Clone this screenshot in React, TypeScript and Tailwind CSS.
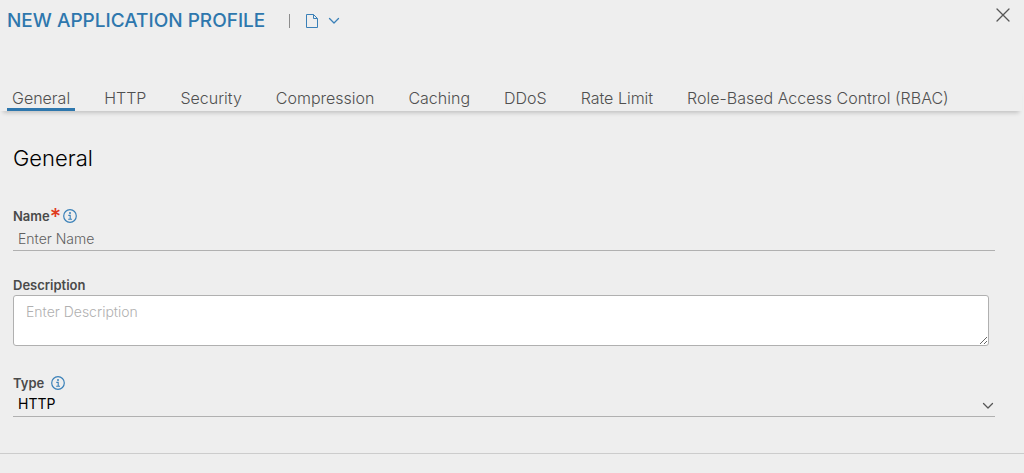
import { useState } from 'react';

const tabs = [
  'General',
  'HTTP',
  'Security',
  'Compression',
  'Caching',
  'DDoS',
  'Rate Limit',
  'Role-Based Access Control (RBAC)',
];

function Chevron({ className }: { className: string }) {
  return (
    <svg className={className} viewBox="0 0 12 8" fill="none" stroke="currentColor" strokeWidth="1.3" strokeLinecap="round" strokeLinejoin="round" aria-hidden="true">
      <path d="M1.5 1.5 6 6l4.500-4.500" />
    </svg>
  );
}

function InfoButton({ label }: { label: string }) {
  return (
    <button type="button" aria-label={label} className="text-[#3a80b8]">
      <svg className="size-3.5" viewBox="0 0 14 14" fill="none" stroke="currentColor" aria-hidden="true">
        <circle cx="7" cy="7" r="6.300" strokeWidth="1.200" />
        <circle cx="7" cy="4" r="1" fill="currentColor" stroke="none" />
        <path d="M5.300 6.400H7.200V10M5.200 10.300H9" strokeWidth="1.100" />
      </svg>
    </button>
  );
}

function Header() {
  return (
    <header className="flex h-[85px] items-start justify-between pr-3.5 pl-[7px]">
      <div className="flex h-[42px] items-center">
        <h1 className="text-[19px] font-medium text-[#2e77ad]">NEW APPLICATION PROFILE</h1>
        <span className="ml-6 h-3.5 w-px bg-[#8c8c8c]" />
        <button type="button" aria-label="Profile actions" className="ml-4 flex items-center gap-2.5 text-[#3a80b8]">
          <svg className="h-3.5 w-3" viewBox="0 0 12 14" fill="none" stroke="currentColor" strokeWidth="1" strokeLinejoin="round" aria-hidden="true">
            <path d="M.5.5H7.500L11.500 4.500V13.500H.5ZM7.500.5V4.500H11.500" />
          </svg>
          <Chevron className="h-2 w-3" />
        </button>
      </div>
      <button type="button" aria-label="Close" className="mt-2 text-[#565656]">
        <svg className="size-3.5" viewBox="0 0 14 14" fill="none" stroke="currentColor" strokeWidth="1.300" strokeLinecap="round" aria-hidden="true">
          <path d="m1 1 12 12M13 1 1 13" />
        </svg>
      </button>
    </header>
  );
}

export default function App() {
  const [active, setActive] = useState('General');

  return (
    <main className="min-h-screen bg-[#eeeeee] font-['Inter',sans-serif] text-[#4a4a4a]">
      <Header />
      <nav role="tablist" className="mr-0.5 flex gap-6 pl-[7px] shadow-[0_5px_4px_-3px_rgba(0,0,0,0.18)]">
        {tabs.map((tab) => (
          <button
            key={tab}
            type="button"
            role="tab"
            aria-selected={tab === active}
            onClick={() => setActive(tab)}
            className={`h-[26px] border-b-3 px-[5px] pt-0.5 text-base leading-5 font-light whitespace-nowrap text-[#505050] ${
              tab === active ? 'border-[#2e77ad]' : 'border-transparent'
            }`}
          >
            {tab}
          </button>
        ))}
      </nav>

      <form className="border-b border-[#cccccc] pr-[29px] pb-9 pl-[13px]">
        <h2 className="pt-[31px] text-[22px] leading-8 font-light text-black">General</h2>

        <div className="mt-8 flex h-5 items-center">
          <label htmlFor="name" className="text-[13px] leading-5 font-semibold">
            Name<span className="align-top text-[22px] leading-5 font-medium text-[#e03a1e]">*</span>
          </label>
          <span className="ml-0.5 flex">
            <InfoButton label="About name" />
          </span>
        </div>
        <input
          id="name"
          type="text"
          required
          placeholder="Enter Name"
          className="mt-px block h-6 w-full border-b border-[#b0b0b0] px-[5px] text-sm font-light text-black outline-none placeholder:text-[#5f5f5f]"
        />

        <label htmlFor="description" className="mt-6 block text-[13px] leading-5 font-semibold">
          Description
        </label>
        <div className="pr-1.5">
          <textarea
            id="description"
            placeholder="Enter Description"
            className="block h-[51px] w-full resize-y rounded-[3px] border border-[#b0b0b0] bg-white px-3 py-1.5 text-sm font-light text-black outline-none placeholder:text-[#b0b0b0]"
          />
        </div>

        <div className="mt-[27px] flex h-5 items-center gap-[7px]">
          <label htmlFor="type" className="text-[13px] leading-5 font-semibold">
            Type
          </label>
          <InfoButton label="About type" />
        </div>
        <div className="relative">
          <select
            id="type"
            defaultValue="HTTP"
            className="block h-6 w-full appearance-none border-b border-[#b0b0b0] px-[5px] pb-0.5 text-sm font-normal text-black outline-none"
          >
            <option>HTTP</option>
            <option>L4</option>
            <option>DNS</option>
          </select>
          <Chevron className="pointer-events-none absolute top-[9px] right-px h-2 w-3 text-[#565656]" />
        </div>
      </form>
    </main>
  );
}
